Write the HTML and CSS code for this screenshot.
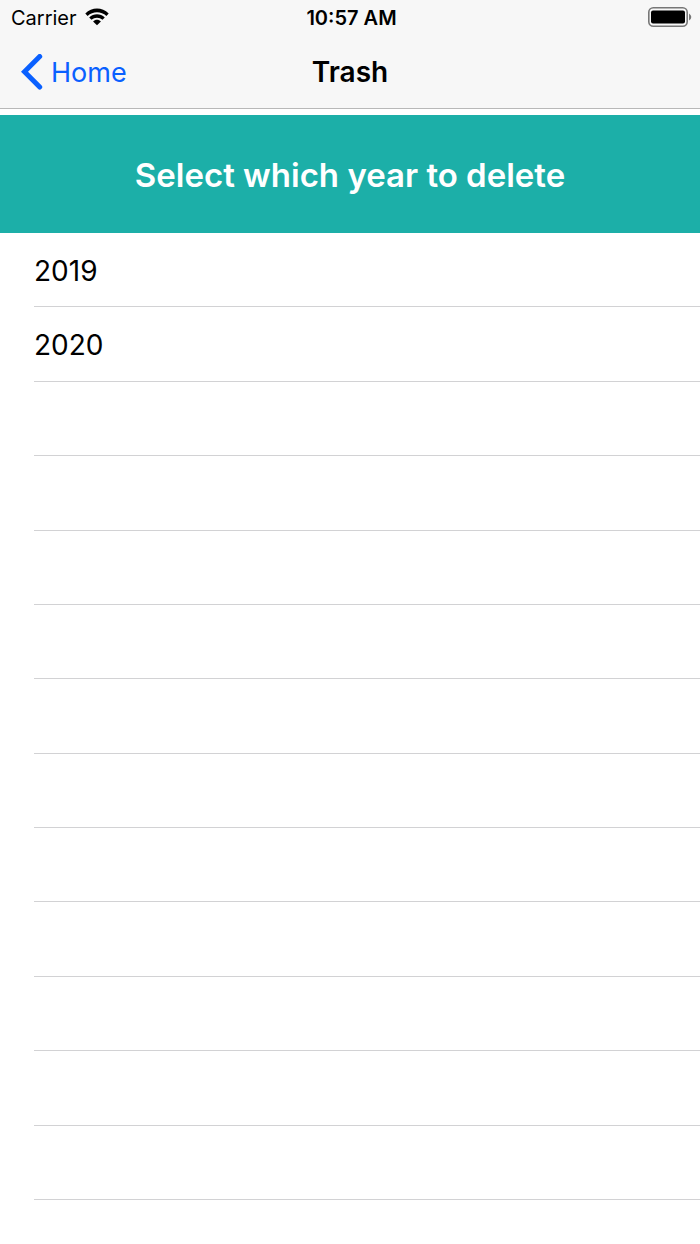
FILE: index.html
```
<!DOCTYPE html>
<html lang="en">
<head>
  <meta charset="UTF-8" />
  <meta name="viewport" content="width=device-width, initial-scale=1.0" />
  <title>Trash</title>
  <link rel="stylesheet" href="styles.css">
</head>
<body>
  <header class="top">
    <div class="status-bar">
      <div class="carrier">
        <span>Carrier</span>
        <svg class="wifi" viewBox="0 0 24 18" aria-hidden="true">
          <path d="M0.3 5.6 C6.8 -1.2 17.2 -1.2 23.7 5.6 L21.4 7.9 C16.1 2.9 7.9 2.9 2.6 7.9 Z" />
          <path d="M4.2 9.5 C8.6 5.2 15.4 5.2 19.8 9.5 L17.5 11.8 C14.4 9 9.6 9 6.5 11.8 Z" />
          <path d="M8.1 13.4 C10.3 11.3 13.7 11.3 15.9 13.4 L12 17.3 Z" />
        </svg>
      </div>
      <div class="time">10:57 AM</div>
      <svg class="battery" viewBox="0 0 44 20" aria-hidden="true">
        <rect class="case" x="0.8" y="0.8" width="38.4" height="18.4" rx="4.5" />
        <rect x="3" y="3.5" width="34" height="13" rx="2" />
        <path class="tip" d="M41 6.5 Q43.3 8 43.3 10 Q43.3 12 41 13.5 Z" />
      </svg>
    </div>
    <nav class="nav-bar">
      <a class="back" href="#">
        <svg viewBox="0 0 22 36" aria-hidden="true">
          <path d="M18.7 2.5 L3.5 17.7 L18.7 33" />
        </svg>
        <span>Home</span>
      </a>
      <h1>Trash</h1>
    </nav>
  </header>

  <main>
    <h2 class="banner">Select which year to delete</h2>
    <ul class="years">
      <li>2019</li>
      <li>2020</li>
      <li></li>
      <li></li>
      <li></li>
      <li></li>
      <li></li>
      <li></li>
      <li></li>
      <li></li>
      <li></li>
      <li></li>
      <li></li>
    </ul>
  </main>
</body>
</html>
```
FILE: styles.css
```
body {
  margin: 0;
  min-height: 100vh;
  display: flex;
  flex-direction: column;
  font-family: Inter, sans-serif;
  color: #000;
  background: #fff;
}

.top {
  background: #f7f7f7;
  border-bottom: 1px solid #b8b8b8;
}

.status-bar {
  display: grid;
  grid-template-columns: 1fr auto 1fr;
  align-items: center;
  height: 36px;
  padding: 0 8px 0 11px;
  font-size: 20px;
}

.carrier {
  display: flex;
  align-items: center;
  gap: 8px;
}

.wifi {
  width: 24px;
  height: 18px;
  margin-bottom: 2px;
}

.time {
  font-weight: 600;
}

.battery {
  width: 44px;
  height: 20px;
  margin-bottom: 2px;
  justify-self: end;
}

.battery .case {
  fill: none;
  stroke: #777;
  stroke-width: 1.6;
}

.battery .tip {
  fill: #777;
}

.nav-bar {
  display: grid;
  grid-template-columns: 1fr auto 1fr;
  align-items: center;
  height: 72px;
  padding: 0 21px;
}

.back {
  display: flex;
  align-items: center;
  gap: 8px;
  color: #0a60ff;
  font-size: 27px;
  text-decoration: none;
}

.back svg {
  width: 22px;
  height: 36px;
  fill: none;
  stroke: currentColor;
  stroke-width: 5;
  stroke-linecap: round;
}

h1 {
  margin: 0;
  font-size: 28px;
  font-weight: 600;
}

main {
  flex: 1;
  display: flex;
  flex-direction: column;
}

.banner {
  margin: 6px 0 0;
  padding: 39px 0 37px;
  font-size: 33px;
  line-height: 42px;
  font-weight: 600;
  text-align: center;
  color: #fff;
  background: #1cafa8;
}

.years {
  flex: 1;
  display: grid;
  grid-auto-rows: minmax(44px, 1fr);
  margin: 0;
  padding: 0 0 44px 34px;
  list-style: none;
  font-size: 28px;
}

.years li {
  display: flex;
  align-items: center;
  padding-top: 2px;
  border-bottom: 1px solid #d2d2d4;
}
```
